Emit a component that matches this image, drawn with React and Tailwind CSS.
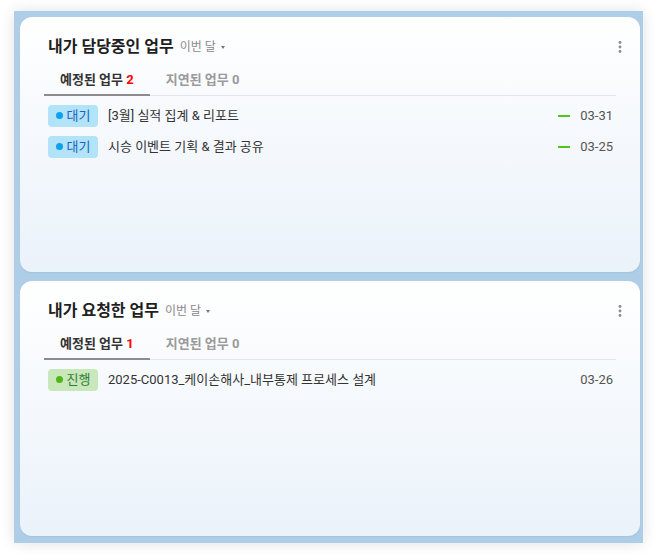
import React from "react";

const FONT = { fontFamily: "Roboto, 'Noto Sans CJK KR', 'Noto Sans', sans-serif" };

function Kebab() {
  return (
    <svg width="16" height="16" viewBox="0 0 16 16" className="block">
      <circle cx="8" cy="3.5" r="1.4" fill="#8a8a8a" />
      <circle cx="8" cy="8" r="1.4" fill="#8a8a8a" />
      <circle cx="8" cy="12.5" r="1.4" fill="#8a8a8a" />
    </svg>
  );
}

function Badge({ kind }) {
  if (kind === "wait") {
    return (
      <span className="flex h-[22px] w-[50px] shrink-0 items-center justify-center gap-[4px] rounded-[4px] bg-[#b3e3f8] text-[13px] text-[#1565c0]">
        <span className="h-[7px] w-[7px] rounded-full bg-[#0aa2ef]" />
        대기
      </span>
    );
  }
  return (
    <span className="flex h-[22px] w-[50px] shrink-0 items-center justify-center gap-[4px] rounded-[4px] bg-[#c8e8bc] text-[13px] text-[#2e7d32]">
      <span className="h-[7px] w-[7px] rounded-full bg-[#52b51a]" />
      진행
    </span>
  );
}

function Row({ kind, title, date, dash }) {
  return (
    <div className="flex h-[31px] items-center pl-1 pr-[3px]">
      <Badge kind={kind} />
      <span className="ml-[10px] flex-1 truncate text-[13px] text-[#333]">{title}</span>
      {dash && <span className="mr-[10px] h-[2px] w-[12px] bg-[#52c41a]" />}
      <span className="text-[13px] text-[#555]">{date}</span>
    </div>
  );
}

function Card({ title, count, rows }) {
  return (
    <div className="h-[255px] rounded-[12px] bg-gradient-to-b from-white to-[#eaf2fa] px-6 pt-[19px] shadow-[0_1px_2px_rgba(0,0,0,0.06)]">
      <div className="-mr-3 flex h-[22px] items-center justify-between">
        <div className="flex items-center pl-1">
          <span className="text-[16px] font-bold text-[#1f1f1f]">{title}</span>
          <span className="ml-[6px] text-[12px] text-[#8a8a8a]">이번 달</span>
          <span className="ml-[5px] mt-[1px] h-0 w-0 border-x-[2.5px] border-t-[3px] border-x-transparent border-t-[#777]" />
        </div>
        <Kebab />
      </div>
      <div className="mt-[8px] flex border-b border-[#e3e6ea]">
        <div className="-mb-px flex h-[30px] items-center border-b-2 border-[#8c8c8c] px-4 text-[13px] font-bold text-[#333]">
          예정된 업무&nbsp;<span className="text-[#ff0000]">{count}</span>
        </div>
        <div className="-mb-px flex h-[30px] items-center border-b-2 border-transparent px-4 text-[13px] font-bold text-[#9a9a9a]">
          지연된 업무 0
        </div>
      </div>
      <div className="pt-[4px]">
        {rows.map((r, i) => (
          <Row key={i} {...r} />
        ))}
      </div>
    </div>
  );
}

export default function App() {
  return (
    <div className="h-[560px] w-[657px] bg-white pl-[14px] pt-[11px]" style={FONT}>
      <div className="flex h-[532px] w-[629px] flex-col gap-[9px] bg-[#aecde6] pb-[7px] pl-[6px] pr-[3px] pt-[6px] shadow-[0_0_14px_rgba(0,0,0,0.12)]">
        <Card
          title="내가 담당중인 업무"
          count="2"
          rows={[
            { kind: "wait", title: "[3월] 실적 집계 & 리포트", date: "03-31", dash: true },
            { kind: "wait", title: "시승 이벤트 기획 & 결과 공유", date: "03-25", dash: true },
          ]}
        />
        <Card
          title="내가 요청한 업무"
          count="1"
          rows={[
            { kind: "prog", title: "2025-C0013_케이손해사_내부통제 프로세스 설계", date: "03-26", dash: false },
          ]}
        />
      </div>
    </div>
  );
}
